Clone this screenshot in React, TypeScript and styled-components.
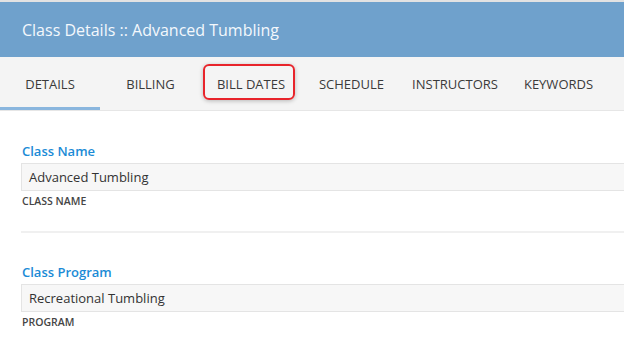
import React from 'react';
import styled, { createGlobalStyle } from 'styled-components';

const GlobalStyle = createGlobalStyle`
  body {
    margin: 0;
    background: #fff;
    font-family: "Open Sans", "Liberation Sans", sans-serif;
  }
`;

const Page = styled.div`
  width: 624px;
  height: 337px;
  overflow: hidden;
  border-top: 2px solid #e2e2e2;
  box-sizing: border-box;
`;

const Header = styled.div`
  height: 55px;
  background: #6fa1cc;
  display: flex;
  align-items: center;
  padding-left: 22px;
`;

const Title = styled.h1`
  margin: 0;
  font-size: 16px;
  font-weight: 400;
  color: #f4f8fc;
`;

const TabBar = styled.div`
  height: 53px;
  background: #f4f4f4;
  border-bottom: 1px solid #e6e6e6;
  display: flex;
  align-items: stretch;
`;

const Tab = styled.div<{ $active?: boolean; $width: number }>`
  position: relative;
  width: ${p => p.$width}px;
  display: flex;
  align-items: center;
  justify-content: center;
  font-size: 13px;
  color: #3a3a3a;
  box-sizing: border-box;
  border-bottom: 3px solid ${p => (p.$active ? '#8ab6de' : 'transparent')};
  padding-top: 3px;
`;

const Highlight = styled.span`
  position: absolute;
  left: 2px;
  right: 6px;
  top: 7px;
  bottom: 7px;
  border: 2px solid #e8242b;
  border-radius: 6px;
  box-shadow: 0 1px 4px rgba(0, 0, 0, 0.25);
`;

const Form = styled.div`
  padding: 31px 0 0 21px;
`;

const Field = styled.div`
  display: flex;
  flex-direction: column;
`;

const Label = styled.div`
  font-size: 13px;
  font-weight: 600;
  color: #1b8bd6;
  padding-left: 1px;
  margin-bottom: 3px;
`;

const Input = styled.div`
  height: 26px;
  background: #f7f7f7;
  border: 1px solid #e4e4e4;
  border-right: none;
  display: flex;
  align-items: center;
  padding-left: 7px;
  font-size: 13px;
  color: #333;
`;

const Hint = styled.div`
  font-size: 10.5px;
  line-height: 14px;
  font-weight: 600;
  color: #454545;
  margin-top: 3px;
  padding-left: 1px;
`;

const Divider = styled.div`
  height: 2px;
  background: #f0f0f0;
  margin: 23px 0 30px;
`;

const tabs = [
  { label: 'DETAILS', width: 100, active: true },
  { label: 'BILLING', width: 101 },
  { label: 'BILL DATES', width: 100, highlight: true },
  { label: 'SCHEDULE', width: 101 },
  { label: 'INSTRUCTORS', width: 106 },
  { label: 'KEYWORDS', width: 101 },
];

export default function App() {
  return (
    <Page>
      <GlobalStyle />
      <Header>
        <Title>Class Details :: Advanced Tumbling</Title>
      </Header>
      <TabBar>
        {tabs.map(t => (
          <Tab key={t.label} $active={t.active} $width={t.width}>
            {t.label}
            {t.highlight && <Highlight />}
          </Tab>
        ))}
      </TabBar>
      <Form>
        <Field>
          <Label>Class Name</Label>
          <Input>Advanced Tumbling</Input>
          <Hint>CLASS NAME</Hint>
        </Field>
        <Divider />
        <Field>
          <Label>Class Program</Label>
          <Input>Recreational Tumbling</Input>
          <Hint>PROGRAM</Hint>
        </Field>
      </Form>
    </Page>
  );
}
